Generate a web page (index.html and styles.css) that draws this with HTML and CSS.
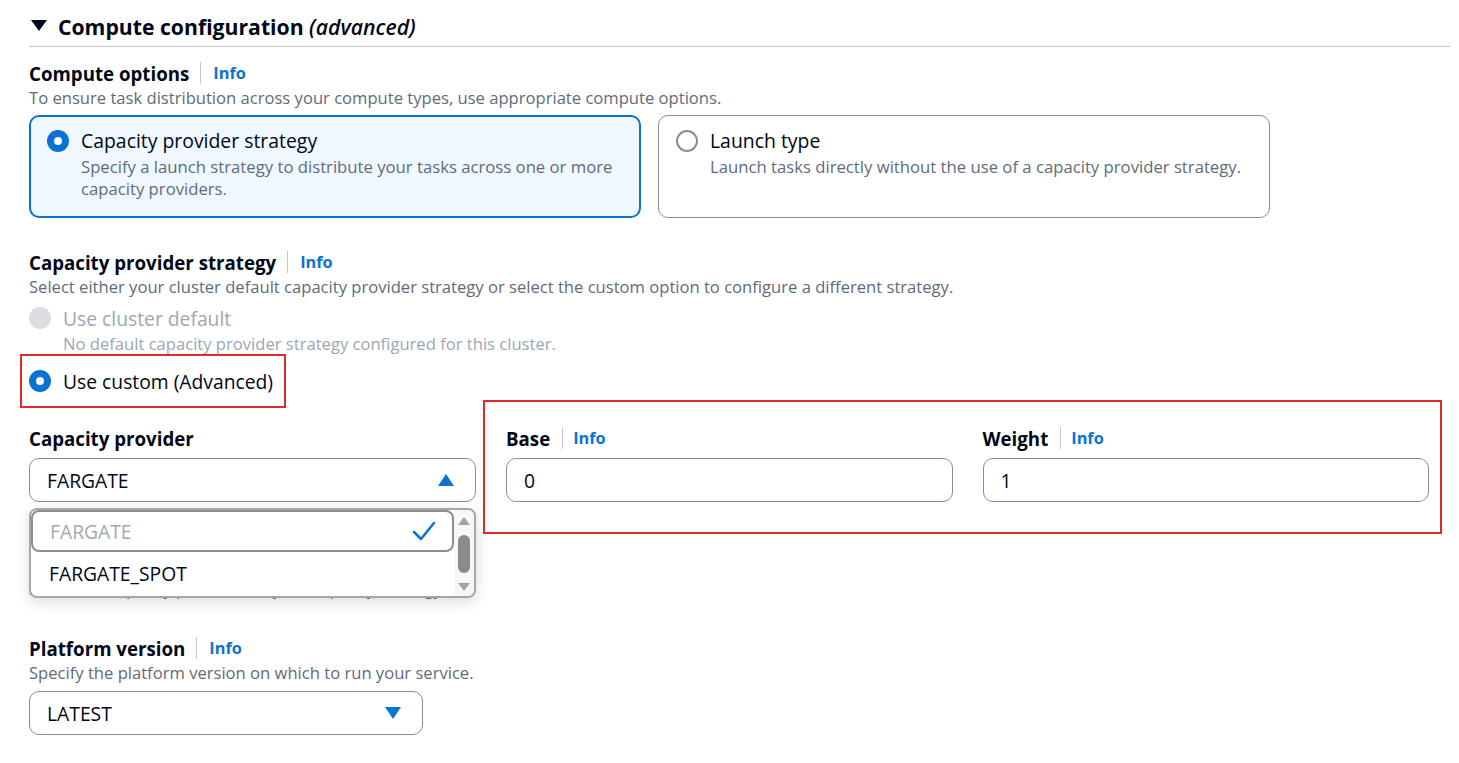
FILE: index.html
```html
<!DOCTYPE html>
<html lang="en">
<head>
    <meta charset="UTF-8">
    <title>Compute configuration</title>
    <link rel="stylesheet" href="styles.css">
</head>
<body>

<div class="page">
    <div class="header">
        <svg class="caret" width="16" height="12" viewBox="0 0 16 12"><path d="M0 0 H16 L8 11 Z" fill="#000716"/></svg>
        <h2>Compute configuration <i>(advanced)</i></h2>
    </div>

    <div class="field compute-options">
        <div class="label"><span>Compute options</span><span class="divider"></span><a class="info">Info</a></div>
        <div class="desc">To ensure task distribution across your compute types, use appropriate compute options.</div>
        <div class="cards">
            <div class="card selected">
                <span class="radio checked"></span>
                <div>
                    <div class="card-title">Capacity provider strategy</div>
                    <div class="card-desc">Specify a launch strategy to distribute your tasks across one or more capacity providers.</div>
                </div>
            </div>
            <div class="card">
                <span class="radio"></span>
                <div>
                    <div class="card-title">Launch type</div>
                    <div class="card-desc">Launch tasks directly without the use of a capacity provider strategy.</div>
                </div>
            </div>
        </div>
    </div>

    <div class="field strategy">
        <div class="label"><span>Capacity provider strategy</span><span class="divider"></span><a class="info">Info</a></div>
        <div class="desc">Select either your cluster default capacity provider strategy or select the custom option to configure a different strategy.</div>
        <div class="option disabled">
            <span class="radio off"></span>
            <span>Use cluster default</span>
        </div>
        <div class="option-desc">No default capacity provider strategy configured for this cluster.</div>
        <div class="option marked">
            <span class="radio checked"></span>
            <span>Use custom (Advanced)</span>
        </div>
    </div>

    <div class="provider-row">
        <div class="provider-col">
            <div class="label"><span>Capacity provider</span></div>
            <div class="select-wrap">
                <div class="select">
                    <span>FARGATE</span>
                    <svg width="16" height="12" viewBox="0 0 16 12"><path d="M8 0 L16 12 H0 Z" fill="#0972d3"/></svg>
                </div>
                <div class="dropdown">
                    <div class="items">
                        <div class="item current">
                            <span>FARGATE</span>
                            <svg width="24" height="20" viewBox="0 0 24 20"><path d="M2 11 L9 18 L22 2" fill="none" stroke="#0972d3" stroke-width="2.5" stroke-linecap="round" stroke-linejoin="round"/></svg>
                        </div>
                        <div class="item"><span>FARGATE_SPOT</span></div>
                    </div>
                    <div class="scrollbar">
                        <svg width="12" height="8" viewBox="0 0 12 8"><path d="M6 0 L12 8 H0 Z" fill="#a3a3a3"/></svg>
                        <div class="thumb"></div>
                        <svg width="12" height="8" viewBox="0 0 12 8"><path d="M0 0 H12 L6 8 Z" fill="#a3a3a3"/></svg>
                    </div>
                </div>
            </div>
            <div class="desc hidden-hint">Select the capacity provider for your capacity strategy.</div>
        </div>
        <div class="marked-box">
            <div class="num-field">
                <div class="label"><span>Base</span><span class="divider"></span><a class="info">Info</a></div>
                <div class="input">0</div>
            </div>
            <div class="num-field">
                <div class="label"><span>Weight</span><span class="divider"></span><a class="info">Info</a></div>
                <div class="input">1</div>
            </div>
        </div>
    </div>

    <div class="field platform">
        <div class="label"><span>Platform version</span><span class="divider"></span><a class="info">Info</a></div>
        <div class="desc">Specify the platform version on which to run your service.</div>
        <div class="select short">
            <span>LATEST</span>
            <svg width="16" height="12" viewBox="0 0 16 12"><path d="M0 0 H16 L8 12 Z" fill="#0972d3"/></svg>
        </div>
    </div>
</div>

</body>
</html>
```

FILE: styles.css
```css
/* Base */
body {
    margin: 0;
    font-family: 'Open Sans', 'Noto Sans', sans-serif;
    color: #000716;
    background: #fff;
}
.page {
    padding: 0 9px 0 29px;
}

/* Section header */
.header {
    height: 40px;
    padding-top: 6px;
    display: flex;
    align-items: center;
    gap: 11px;
    border-bottom: 1px solid #c6c6cd;
}
.caret {
    margin-left: 2px;
}
.header h2 {
    margin: 0;
    font-size: 21.2px;
    font-weight: 700;
}
.header h2 i {
    font-weight: 600;
}

/* Labels */
.label {
    display: flex;
    align-items: center;
    height: 26px;
    font-size: 18.7px;
    font-weight: 700;
}
.divider {
    width: 1px;
    height: 22px;
    background: #c6c6cd;
    margin: 0 12px 0 11px;
}
.info {
    color: #0972d3;
    font-size: 16.3px;
    font-weight: 700;
}
.desc {
    font-size: 16.6px;
    line-height: 24px;
    color: #5f6b7a;
}

.compute-options {
    margin-top: 13px;
}

/* Tiles */
.cards {
    display: flex;
    gap: 17px;
    margin-top: 5px;
}
.card {
    width: 576px;
    display: flex;
    gap: 12px;
    align-items: flex-start;
    padding: 13px 17px 16px 17px;
    border: 1px solid #8c8c94;
    border-radius: 10px;
}
.card.selected {
    border: 2px solid #0972d3;
    background: #f0f8ff;
    padding: 12px 16px 16px 16px;
}
.card-title {
    font-size: 19.4px;
    line-height: 24px;
}
.card-desc {
    margin-top: 3px;
    font-size: 16.7px;
    line-height: 22px;
    color: #5f6b7a;
}

/* Radios */
.radio {
    flex: none;
    box-sizing: border-box;
    width: 22px;
    height: 22px;
    margin-top: 1px;
    border-radius: 50%;
    border: 2px solid #8c8c94;
    background: #fff;
}
.radio.checked {
    border: 7px solid #0972d3;
}
.radio.off {
    border: none;
    background: #dcdde1;
}

/* Strategy */
.strategy {
    margin-top: 31px;
}
.option {
    display: flex;
    align-items: center;
    gap: 12px;
    height: 24px;
    font-size: 19.3px;
}
.option .radio {
    margin-top: 0;
}
.option.disabled {
    margin-top: 7px;
    color: #9ba7b6;
}
.option-desc {
    margin: 3px 0 0 34px;
    font-size: 16.6px;
    line-height: 22px;
    color: #9ba7b6;
}
.option.marked {
    box-sizing: border-box;
    width: 266px;
    height: 54px;
    margin: -1px 0 0 -9px;
    padding-left: 7px;
    border: 2px solid #df2a2a;
}

/* Provider row */
.provider-row {
    display: flex;
    align-items: flex-start;
    gap: 7px;
    margin: -8px 8px 0 0;
}
.provider-col {
    width: 447px;
    padding-top: 25px;
}
.select-wrap {
    position: relative;
    margin-top: 7px;
}
.select {
    box-sizing: border-box;
    height: 44px;
    display: flex;
    align-items: center;
    justify-content: space-between;
    padding: 0 21px 0 17px;
    border: 1px solid #8c8c94;
    border-radius: 10px;
    font-size: 19.3px;
}
.select.short {
    width: 394px;
    margin-top: 6px;
}
.dropdown {
    position: absolute;
    top: 50px;
    left: 0;
    right: 0;
    box-sizing: border-box;
    height: 90px;
    display: flex;
    background: #fff;
    border: 2px solid #a5a5ab;
    border-radius: 8px;
    box-shadow: 0 4px 14px rgba(0, 7, 22, 0.15);
    overflow: hidden;
}
.items {
    flex: 1;
}
.item {
    box-sizing: border-box;
    height: 43px;
    display: flex;
    align-items: center;
    justify-content: space-between;
    padding: 0 16px 0 18px;
    font-size: 19.3px;
}
.item.current {
    height: 42px;
    color: #a4a8b0;
    border: 2px solid #8c8c94;
    border-radius: 8px;
    padding: 0 16px 0 17px;
}
.scrollbar {
    width: 20px;
    display: flex;
    flex-direction: column;
    align-items: center;
    justify-content: space-between;
    padding: 7px 0 5px;
    background: #f7f7f7;
}
.thumb {
    width: 12px;
    height: 38px;
    border-radius: 6px;
    background: #8b8b8b;
}
.hidden-hint {
    margin-top: 76px;
    line-height: 22px;
    white-space: nowrap;
}

/* Base / weight */
.marked-box {
    flex: 1;
    display: flex;
    gap: 30px;
    padding: 23px 11px 30px 21px;
    border: 2px solid #df2a2a;
}
.num-field {
    flex: 1;
}
.num-field .divider {
    margin: 0 10px 0 12px;
}
.input {
    box-sizing: border-box;
    height: 44px;
    margin-top: 7px;
    display: flex;
    align-items: center;
    padding-left: 17px;
    border: 1px solid #8c8c94;
    border-radius: 10px;
    font-size: 19.3px;
}

/* Platform */
.platform {
    margin-top: 35px;
}
```
